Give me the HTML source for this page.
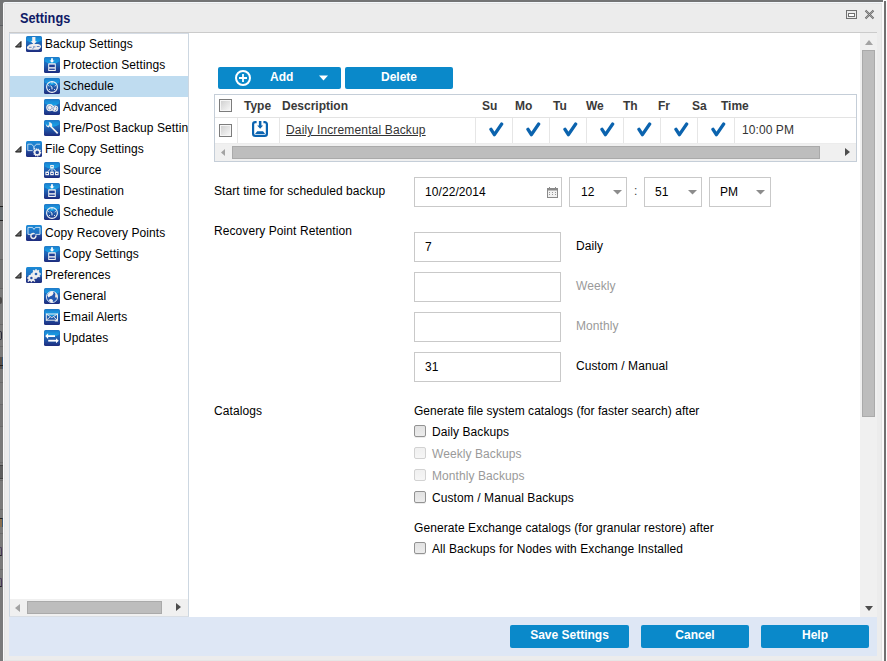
<!DOCTYPE html>
<html><head><meta charset="utf-8">
<style>
*{box-sizing:border-box;margin:0;padding:0}
html,body{width:887px;height:661px;overflow:hidden;background:#7a7a7a;font-family:"Liberation Sans",sans-serif;font-size:12px;color:#000}
.a{position:absolute}
.t{position:absolute;white-space:nowrap;line-height:14px;font-size:12px;letter-spacing:0.08px}
.b{letter-spacing:0}
.b{font-weight:bold}
#dlg{position:absolute;left:3px;top:2px;width:881px;height:670px;background:#ececec;border-left:1px solid #fafafa;border-top:1px solid #f3f7fb;border-radius:2px 2px 0 0;box-shadow:inset 1px 1px 0 #e4e4e4}
.btn{position:absolute;background:#0a89ca;border-radius:2px;color:#fff;font-weight:bold;font-size:12px;line-height:22px;text-align:center}
.fld{position:absolute;background:#fff;border:1px solid #c9c9c9}
.cb{position:absolute;width:12px;height:12px;border:1px solid #939393;border-radius:2px;background:linear-gradient(#e2e2e2,#ececec);box-shadow:0 1px 0 rgba(0,0,0,0.08)}
.cbd{border-color:#d2d2d2;background:linear-gradient(#f0f0f0,#f6f6f6);box-shadow:none}
.gcb{position:absolute;width:13px;height:13px;border:1px solid #7c7c7c;box-shadow:inset 0 0 0 1px #f6f6f6;background:linear-gradient(135deg,#cdcdcd,#fafafa)}
.chk{position:absolute;width:14px;height:14px}
.sep{position:absolute;width:1px;background:#e6e6e6}
.ico{position:absolute;width:16px;height:16px}
.gray{color:#9a9a9a}
</style></head><body>
<svg width="0" height="0" style="position:absolute">
<defs>
<linearGradient id="ig" x1="0" y1="0" x2="0" y2="1">
<stop offset="0" stop-color="#1f7ecb"/><stop offset="0.45" stop-color="#1f66b8"/><stop offset="1" stop-color="#1e2c7e"/>
</linearGradient>
<linearGradient id="fg" x1="0" y1="0" x2="0" y2="1">
<stop offset="0" stop-color="#1c86d3"/><stop offset="1" stop-color="#17a6ea"/>
</linearGradient>
<linearGradient id="ig2" x1="0" y1="0" x2="0" y2="1">
<stop offset="0" stop-color="#1b8ad6"/><stop offset="0.55" stop-color="#1f6ec0"/><stop offset="0.62" stop-color="#22499c"/><stop offset="1" stop-color="#1e2c7e"/>
</linearGradient>
</defs>
</svg>

<!-- background strip details -->
<div class="a" style="left:0;top:0;width:887px;height:25px;background:#737475"></div>
<div class="a" style="left:0;top:25px;width:3px;height:1px;background:#5c5f63"></div>
<div class="a" style="left:0;top:206px;width:3px;height:15px;background:#6b7073;border-top:1px solid #222;border-bottom:1px solid #222"></div>
<div class="a" style="left:0;top:259px;width:3px;height:30px;background:#747474;border-top:1px solid #666;border-bottom:1px solid #666"></div>
<div class="a" style="left:0;top:297px;width:2px;height:7px;background:#4c4a48;border-radius:0 3px 3px 0"></div>
<div class="a" style="left:0;top:324px;width:3px;height:1px;background:#6a6a6a"></div>
<div class="a" style="left:0;top:331px;width:2px;height:9px;border:1px solid #2a2a3a;border-left:0;border-radius:0 2px 2px 0"></div>
<div class="a" style="left:0;top:346px;width:3px;height:1px;background:#6a6a6a"></div>
<div class="a" style="left:0;top:357px;width:3px;height:12px;background:#5a5048;border-right:1px solid #3a5a7a"></div>
<div class="a" style="left:0;top:365px;width:3px;height:1px;background:#222"></div>
<div class="a" style="left:0;top:382px;width:3px;height:1px;background:#6a6a6a"></div>
<div class="a" style="left:0;top:404px;width:3px;height:23px;background:#757575;border-top:1px solid #6a6a6a;border-bottom:1px solid #6a6a6a"></div>
<div class="a" style="left:0;top:462px;width:3px;height:1px;background:#6c6c6c"></div>
<div class="a" style="left:0;top:465px;width:3px;height:14px;background:#5e5e5e;border-top:1px solid #444;border-bottom:1px solid #444"></div>
<div class="a" style="left:0;top:480px;width:3px;height:1px;background:#6a6a6a"></div>
<div class="a" style="left:0;top:509px;width:3px;height:1px;background:#6a6a6a"></div>
<div class="a" style="left:0;top:518px;width:3px;height:9px;background:#8a7050;border-right:1px solid #3a5a7a;border-top:1px solid #222"></div>
<div class="a" style="left:0;top:533px;width:3px;height:1px;background:#6a6a6a"></div>
<div class="a" style="left:0;top:547px;width:2px;height:9px;border:1px solid #4a3a5a;border-left:0;border-radius:0 3px 0 0;border-bottom:1px solid #222"></div>
<div class="a" style="left:0;top:569px;width:3px;height:1px;background:#6a6a6a"></div>
<div class="a" style="left:0;top:578px;width:2px;height:9px;border:1px solid #4a3a5a;border-left:0;border-radius:0 3px 0 0;border-bottom:1px solid #222"></div>
<div class="a" style="left:883px;top:1px;width:3px;height:660px;background:#707070;border-left:1px solid #fafafa"></div>
<div class="a" style="left:886px;top:0;width:1px;height:661px;background:#fcfcfc"></div><div class="a" style="left:883px;top:0;width:4px;height:1px;background:#fcfcfc"></div>

<div id="dlg"></div>
<div class="a" style="left:881px;top:3px;width:1px;height:658px;background:#e2e2e2"></div>
<div class="a" style="left:5px;top:660px;width:876px;height:1px;background:#e6e6e6"></div>
<div class="a" style="left:882px;top:2px;width:2px;height:659px;background:#fafafa"></div>

<!-- title -->
<div class="t b" style="left:20px;top:10px;font-size:13px;line-height:16px;color:#0f1a66;transform:scale(0.98,1.1);transform-origin:0 3px">Settings</div>
<!-- restore icon -->
<div class="a" style="left:846px;top:10px;width:11px;height:9px;border:1px solid #707070"></div>
<div class="a" style="left:848px;top:13px;width:7px;height:4px;border:1px solid #707070;background:#fff"></div>
<svg class="a" style="left:864px;top:9px" width="11" height="11" viewBox="0 0 11 11"><path d="M1.5 1.5L9.5 9.5M9.5 1.5L1.5 9.5" stroke="#6a6a6a" stroke-width="1.9" fill="none"/><path d="M1.5 1.5L9.5 9.5M9.5 1.5L1.5 9.5" stroke="#d0d0d0" stroke-width="0.5" fill="none"/></svg>

<!-- top border of panels -->
<div class="a" style="left:9px;top:32px;width:868px;height:1px;background:#cbcbcb"></div>

<!-- tree panel -->
<div class="a" style="left:9px;top:33px;width:180px;height:584px;background:#fff;border-left:1px solid #cdd7e1;border-right:1px solid #cdd7e1;border-bottom:1px solid #d9dee4"></div>
<div class="a" style="left:10px;top:33px;width:178px;height:1px;background:#d5dce5"></div>
<div class="a" style="left:10px;top:76px;width:178px;height:21px;background:#bfdcf0"></div>

<!-- tree scrollbar -->
<div class="a" style="left:10px;top:599px;width:178px;height:17px;background:#f0f0f0"></div>
<div class="a" style="left:27px;top:601px;width:135px;height:13px;background:#bdbdbd;border:1px solid #aaaaaa"></div>
<svg class="a" style="left:15px;top:604px" width="6" height="8"><path d="M5 0L0 4L5 8Z" fill="#a3a3a3"/></svg>
<svg class="a" style="left:176px;top:603px" width="6" height="8"><path d="M0 0L5 4L0 8Z" fill="#4d4d4d"/></svg>

<div class="a" style="left:10px;top:33px;width:178px;height:566px;overflow:hidden">
<svg class="a" style="left:5px;top:7px" width="7" height="8" viewBox="0 0 7 8"><path d="M6 1.5V7H0.5Z" fill="#6a6a6a" stroke="#151515" stroke-width="1" stroke-linejoin="round"/></svg>
<svg class="ico" style="left:16px;top:3px" width="16" height="16" viewBox="0 0 16 16"><rect x="0" y="0" width="16" height="16" rx="1.5" fill="url(#ig)"/><path d="M0.6 1.2H15.4V4.2Q8 10 0.6 4.2Z" fill="url(#fg)"/><path d="M6.2 1H9.4V5.2H10.9L7.8 8.6 4.7 5.2H6.2Z" fill="#f4f2f2"/><path d="M2.4 9.4Q3 8.2 6 8.1H12Q14.6 8.3 15.1 10.2Q15.1 12.6 12.4 13.7H4.2Q1 13.9 0.8 11.9Q0.8 10.3 2.4 9.4Z" fill="#ededed"/><path d="M3 11.3h2.6M7 10.9h2.4M10.8 10.5h2.8M6.4 12.9l1.4-1.2" stroke="#3f68b2" stroke-width="0.8" fill="none"/></svg>
<div class="t" style="left:35px;top:4px;color:#000">Backup Settings</div>
<svg class="ico" style="left:34px;top:24px" width="16" height="16" viewBox="0 0 16 16"><rect x="0" y="0" width="16" height="16" rx="1.5" fill="url(#ig)"/><path d="M0.6 1.2H15.4V4.2Q8 10 0.6 4.2Z" fill="url(#fg)"/><path d="M7.1 1.2h1.8v2.4h1.6L8 5.8 5.5 3.6h1.6z" fill="#fff"/><rect x="4.2" y="6.3" width="7.6" height="7.8" rx="0.6" fill="#f3f3f3"/><rect x="5.2" y="7.6" width="5.6" height="2.6" fill="#1f3f96"/><rect x="5.2" y="11.6" width="5.6" height="1.3" fill="#1f3f96"/></svg>
<div class="t" style="left:53px;top:25px;color:#000">Protection Settings</div>
<svg class="ico" style="left:34px;top:45px" width="16" height="16" viewBox="0 0 16 16"><rect x="0" y="0" width="16" height="16" rx="1.5" fill="url(#ig)"/><path d="M0.6 1.2H15.4V4.2Q8 10 0.6 4.2Z" fill="url(#fg)"/><circle cx="8" cy="9" r="5.4" fill="none" stroke="#f4f4f4" stroke-width="1.1"/><path d="M8 4.3v1.2M4.3 7.5l1 .6M11.7 7.5l-1 .6M5 12l.9-.8M11 12l-.9-.8M8 9.2l-1.6-1.4M8 9.2v2.2" stroke="#f4f4f4" stroke-width="1"/></svg>
<div class="t" style="left:53px;top:46px;color:#000">Schedule</div>
<svg class="ico" style="left:34px;top:66px" width="16" height="16" viewBox="0 0 16 16"><rect x="0" y="0" width="16" height="16" rx="1.5" fill="url(#ig)"/><path d="M0.6 1.2H15.4V4.2Q8 10 0.6 4.2Z" fill="url(#fg)"/><circle cx="5.8" cy="8.6" r="3.6" fill="#eee"/><circle cx="11" cy="9.6" r="3.2" fill="#eee"/><circle cx="5.8" cy="8.6" r="2.2" fill="none" stroke="#2350a8" stroke-width="0.9" stroke-dasharray="0.9 0.9"/><circle cx="11" cy="9.6" r="1.9" fill="none" stroke="#2350a8" stroke-width="0.9" stroke-dasharray="0.9 0.9"/></svg>
<div class="t" style="left:53px;top:67px;color:#000">Advanced</div>
<svg class="ico" style="left:34px;top:87px" width="16" height="16" viewBox="0 0 16 16"><rect x="0" y="0" width="16" height="16" rx="1.5" fill="url(#ig)"/><path d="M0.6 1.2H15.4V4.2Q8 10 0.6 4.2Z" fill="url(#fg)"/><path d="M5.2 3.2a3 3 0 0 0 1.6 4.3l6.3 6.4 1.2-1.2-6.3-6.3A3 3 0 0 0 4.6 2.3l.9 1.8-.8 1.5-1.6.1-1 -1.6a3 3 0 0 0 2.9 3.3" fill="#f2f2f2"/></svg>
<div class="t" style="left:53px;top:88px;color:#000">Pre/Post Backup Settings</div>
<svg class="a" style="left:5px;top:112px" width="7" height="8" viewBox="0 0 7 8"><path d="M6 1.5V7H0.5Z" fill="#6a6a6a" stroke="#151515" stroke-width="1" stroke-linejoin="round"/></svg>
<svg class="ico" style="left:16px;top:108px" width="16" height="16" viewBox="0 0 16 16"><rect x="0" y="0" width="16" height="16" rx="1.5" fill="url(#ig2)"/><path d="M1.8 3.2h3.8l2.4 2.6 2.4-2.6h3.8" fill="none" stroke="#cfe3f3" stroke-width="0.9"/><path d="M1.8 3.2v6.4h4.8" fill="none" stroke="#cfe3f3" stroke-width="0.9"/><path d="M7.5 5.5l1.6 1.8-1.6 1.6z" fill="#fff"/><circle cx="11.2" cy="11.4" r="3.2" fill="none" stroke="#f2f2f2" stroke-width="1.7" stroke-dasharray="1.15 0.75"/><circle cx="11.2" cy="11.4" r="2.5" fill="none" stroke="#f2f2f2" stroke-width="1.4"/></svg>
<div class="t" style="left:35px;top:109px;color:#000">File Copy Settings</div>
<svg class="ico" style="left:34px;top:129px" width="16" height="16" viewBox="0 0 16 16"><rect x="0" y="0" width="16" height="16" rx="1.5" fill="url(#ig)"/><path d="M0.6 1.2H15.4V4.2Q8 10 0.6 4.2Z" fill="url(#fg)"/><rect x="6.2" y="3" width="3.6" height="3.2" fill="#f2f2f2"/><rect x="7.2" y="4" width="1.6" height="0.8" fill="#1d8fd8"/><path d="M7 6.4L3.8 9.6M9 6.4l3.2 3.2M8 6.2v3.4" stroke="#f2f2f2" stroke-width="0.9"/><rect x="1.4" y="9.6" width="3.6" height="3.6" fill="#f2f2f2"/><rect x="6.2" y="9.6" width="3.6" height="3.6" fill="#f2f2f2"/><rect x="11" y="9.6" width="3.6" height="3.6" fill="#f2f2f2"/><rect x="2.4" y="11" width="1.6" height="1" fill="#1f3f96"/><rect x="7.2" y="11" width="1.6" height="1" fill="#1f3f96"/><rect x="12" y="11" width="1.6" height="1" fill="#1f3f96"/></svg>
<div class="t" style="left:53px;top:130px;color:#000">Source</div>
<svg class="ico" style="left:34px;top:150px" width="16" height="16" viewBox="0 0 16 16"><rect x="0" y="0" width="16" height="16" rx="1.5" fill="url(#ig)"/><path d="M0.6 1.2H15.4V4.2Q8 10 0.6 4.2Z" fill="url(#fg)"/><path d="M7.1 1.2h1.8v2.4h1.6L8 5.8 5.5 3.6h1.6z" fill="#fff"/><rect x="4.2" y="6.3" width="7.6" height="7.8" rx="0.6" fill="#f3f3f3"/><rect x="5.2" y="7.6" width="5.6" height="2.6" fill="#1f3f96"/><rect x="5.2" y="11.6" width="5.6" height="1.3" fill="#1f3f96"/></svg>
<div class="t" style="left:53px;top:151px;color:#000">Destination</div>
<svg class="ico" style="left:34px;top:171px" width="16" height="16" viewBox="0 0 16 16"><rect x="0" y="0" width="16" height="16" rx="1.5" fill="url(#ig)"/><path d="M0.6 1.2H15.4V4.2Q8 10 0.6 4.2Z" fill="url(#fg)"/><circle cx="8" cy="9" r="5.4" fill="none" stroke="#f4f4f4" stroke-width="1.1"/><path d="M8 4.3v1.2M4.3 7.5l1 .6M11.7 7.5l-1 .6M5 12l.9-.8M11 12l-.9-.8M8 9.2l-1.6-1.4M8 9.2v2.2" stroke="#f4f4f4" stroke-width="1"/></svg>
<div class="t" style="left:53px;top:172px;color:#000">Schedule</div>
<svg class="a" style="left:5px;top:196px" width="7" height="8" viewBox="0 0 7 8"><path d="M6 1.5V7H0.5Z" fill="#6a6a6a" stroke="#151515" stroke-width="1" stroke-linejoin="round"/></svg>
<svg class="ico" style="left:16px;top:192px" width="16" height="16" viewBox="0 0 16 16"><rect x="0" y="0" width="16" height="16" rx="1.5" fill="url(#ig2)"/><path d="M6.6 9.4H2V2.4h4.4l1.6 2 1.6-2H14v7h-4.6" fill="none" stroke="#d8e8f5" stroke-width="0.9"/><path d="M9.8 10.4a2.5 2.5 0 1 1-1.2-1.6" fill="none" stroke="#ececec" stroke-width="1.5"/></svg>
<div class="t" style="left:35px;top:193px;color:#000">Copy Recovery Points</div>
<svg class="ico" style="left:34px;top:213px" width="16" height="16" viewBox="0 0 16 16"><rect x="0" y="0" width="16" height="16" rx="1.5" fill="url(#ig)"/><path d="M0.6 1.2H15.4V4.2Q8 10 0.6 4.2Z" fill="url(#fg)"/><path d="M7.1 1.2h1.8v2.4h1.6L8 5.8 5.5 3.6h1.6z" fill="#fff"/><rect x="4.2" y="6.3" width="7.6" height="7.8" rx="0.6" fill="#f3f3f3"/><rect x="5.2" y="7.6" width="5.6" height="2.6" fill="#1f3f96"/><rect x="5.2" y="11.6" width="5.6" height="1.3" fill="#1f3f96"/></svg>
<div class="t" style="left:53px;top:214px;color:#000">Copy Settings</div>
<svg class="a" style="left:5px;top:238px" width="7" height="8" viewBox="0 0 7 8"><path d="M6 1.5V7H0.5Z" fill="#6a6a6a" stroke="#151515" stroke-width="1" stroke-linejoin="round"/></svg>
<svg class="ico" style="left:16px;top:234px" width="16" height="16" viewBox="0 0 16 16"><rect x="0" y="0" width="16" height="16" rx="1.5" fill="url(#ig2)"/><g fill="#eee"><circle cx="10" cy="7" r="3.7"/><path d="M9.2 2.2h1.6v9.6H9.2zM5.2 6.2h9.6v1.6H5.2zM6.6 3.8l1.1-1.1 6.6 6.6-1.1 1.1zM13.4 3.8l-1.1-1.1-6.6 6.6 1.1 1.1z"/><circle cx="5.4" cy="11" r="3.2"/><path d="M4.7 6.8h1.4v8.4H4.7zM1.2 10.3h8.4v1.4H1.2zM2.4 8.9l1-1 6 6-1 1zM8.4 8.9l-1-1-6 6 1 1z"/></g><circle cx="10" cy="7" r="1.3" fill="#2a66b8"/><circle cx="5.4" cy="11" r="1.2" fill="#2350a8"/></svg>
<div class="t" style="left:35px;top:235px;color:#000">Preferences</div>
<svg class="ico" style="left:34px;top:255px" width="16" height="16" viewBox="0 0 16 16"><rect x="0" y="0" width="16" height="16" rx="1.5" fill="url(#ig)"/><path d="M0.6 1.2H15.4V4.2Q8 10 0.6 4.2Z" fill="url(#fg)"/><circle cx="8" cy="9" r="5.6" fill="#2458b0" stroke="#e8eef8" stroke-width="0.9"/><path d="M3.3 7.5Q4.8 3.8 8.6 3.6L9.6 5.2 8.2 7.4Q6 7.6 4.6 9.6Z" fill="#f4f4f4"/><path d="M5.2 11.4Q7.6 10.4 9 12.4L8.6 14.4Q6.2 14.4 5 12.8Z" fill="#f4f4f4"/><path d="M10.8 4.2Q13.6 5.6 13.8 9.2L11.6 9.8Q10.6 8 11.4 6.4Z" fill="#f0e6dc"/></svg>
<div class="t" style="left:53px;top:256px;color:#000">General</div>
<svg class="ico" style="left:34px;top:276px" width="16" height="16" viewBox="0 0 16 16"><rect x="0" y="0" width="16" height="16" rx="1.5" fill="url(#ig)"/><path d="M0.6 1.2H15.4V4.2Q8 10 0.6 4.2Z" fill="url(#fg)"/><rect x="2.3" y="5" width="11.2" height="6.2" fill="none" stroke="#eee" stroke-width="1"/><path d="M2.3 5l5.6 3.6L13.5 5M2.3 11.2l3.6-3M13.5 11.2l-3.6-3" fill="none" stroke="#eee" stroke-width="0.9"/><path d="M10.6 12.4l1.8-2.2 1.8 2.2z" fill="#eee"/></svg>
<div class="t" style="left:53px;top:277px;color:#000">Email Alerts</div>
<svg class="ico" style="left:34px;top:297px" width="16" height="16" viewBox="0 0 16 16"><rect x="0" y="0" width="16" height="16" rx="1.5" fill="url(#ig)"/><path d="M0.6 1.2H15.4V4.2Q8 10 0.6 4.2Z" fill="url(#fg)"/><path d="M11 5.2H4v1.8h7z" fill="#fff"/><path d="M1.2 6.1L4.1 3.3v5.6z" fill="#fff"/><path d="M4.2 9.8h8v1.8h-8z" fill="#fff"/><path d="M14.8 10.7l-2.8-2.4v5z" fill="#fff"/></svg>
<div class="t" style="left:53px;top:298px;color:#000">Updates</div>
</div>

<!-- content panel -->
<div class="a" style="left:189px;top:33px;width:671px;height:584px;background:#fff"></div>
<!-- vertical scrollbar -->
<div class="a" style="left:860px;top:33px;width:17px;height:584px;background:#f0f0f0"></div>
<svg class="a" style="left:865px;top:40px" width="8" height="5"><path d="M0 5L4 0L8 5Z" fill="#a3a3a3"/></svg>
<div class="a" style="left:862px;top:50px;width:13px;height:367px;background:#bdbdbd;border:1px solid #aaaaaa"></div>
<svg class="a" style="left:865px;top:606px" width="8" height="5"><path d="M0 0L4 5L8 0Z" fill="#4d4d4d"/></svg>

<div class="btn" style="left:218px;top:67px;width:123px;height:22px"></div>
<svg class="a" style="left:234px;top:69px" width="18" height="18" viewBox="0 0 18 18"><circle cx="9" cy="9" r="7" fill="none" stroke="#fff" stroke-width="2"/><path d="M9 5v8M5 9h8" stroke="#fff" stroke-width="1.8"/></svg>
<div class="t b" style="left:270px;top:70px;color:#fff">Add</div>
<svg class="a" style="left:319px;top:75px" width="10" height="6"><path d="M0 0.5h9L4.5 5.5z" fill="#fff"/></svg>
<div class="btn" style="left:345px;top:67px;width:108px;height:22px;line-height:20px">Delete</div>
<div class="a" style="left:214px;top:94px;width:643px;height:68px;border:1px solid #c5ced8;background:#fff"></div>
<div class="a" style="left:215px;top:117px;width:641px;height:1px;background:#e3e3e3"></div>
<div class="a" style="left:215px;top:143px;width:641px;height:1px;background:#ececec"></div>
<div class="sep" style="left:237px;top:118px;height:25px"></div>
<div class="sep" style="left:279px;top:118px;height:25px"></div>
<div class="sep" style="left:475px;top:118px;height:25px"></div>
<div class="sep" style="left:512px;top:118px;height:25px"></div>
<div class="sep" style="left:549px;top:118px;height:25px"></div>
<div class="sep" style="left:586px;top:118px;height:25px"></div>
<div class="sep" style="left:623px;top:118px;height:25px"></div>
<div class="sep" style="left:660px;top:118px;height:25px"></div>
<div class="sep" style="left:697px;top:118px;height:25px"></div>
<div class="sep" style="left:734px;top:118px;height:25px"></div>
<div class="gcb" style="left:219px;top:99px"></div>
<div class="gcb" style="left:219px;top:124px"></div>
<div class="t b" style="left:244px;top:99px;color:#3a3a3a">Type</div>
<div class="t b" style="left:282px;top:99px;color:#3a3a3a">Description</div>
<div class="t b" style="left:482px;top:99px;color:#3a3a3a">Su</div>
<div class="t b" style="left:515px;top:99px;color:#3a3a3a">Mo</div>
<div class="t b" style="left:553px;top:99px;color:#3a3a3a">Tu</div>
<div class="t b" style="left:586px;top:99px;color:#3a3a3a">We</div>
<div class="t b" style="left:623px;top:99px;color:#3a3a3a">Th</div>
<div class="t b" style="left:658px;top:99px;color:#3a3a3a">Fr</div>
<div class="t b" style="left:692px;top:99px;color:#3a3a3a">Sa</div>
<div class="t b" style="left:721px;top:99px;color:#3a3a3a">Time</div>
<svg class="a" style="left:252px;top:121px" width="16" height="16" viewBox="0 0 16 16"><path d="M4.6 1.1H3.3A2.2 2.2 0 0 0 1.1 3.3V12.7A2.2 2.2 0 0 0 3.3 14.9H12.7A2.2 2.2 0 0 0 14.9 12.7V3.3A2.2 2.2 0 0 0 12.7 1.1H11.4" fill="none" stroke="#0a63b0" stroke-width="2.2"/><path d="M6.9 0H9.4V4.4H11.1L8.15 7.8 5.2 4.4H6.9Z" fill="#0a63b0"/><path d="M3 12.9H13.2L11 10.2H5.2Z" fill="#0a63b0"/></svg>
<div class="t" style="left:286px;top:123px;color:#333;text-decoration:underline;letter-spacing:0.15px">Daily Incremental Backup</div>
<svg class="a" style="left:489px;top:122px" width="15" height="15" viewBox="0 0 15 15"><path d="M2 7.4L5.4 12.6 12.6 2.1" fill="none" stroke="#0b63ae" stroke-width="3.4" stroke-linecap="round" stroke-linejoin="round"/></svg>
<svg class="a" style="left:526px;top:122px" width="15" height="15" viewBox="0 0 15 15"><path d="M2 7.4L5.4 12.6 12.6 2.1" fill="none" stroke="#0b63ae" stroke-width="3.4" stroke-linecap="round" stroke-linejoin="round"/></svg>
<svg class="a" style="left:563px;top:122px" width="15" height="15" viewBox="0 0 15 15"><path d="M2 7.4L5.4 12.6 12.6 2.1" fill="none" stroke="#0b63ae" stroke-width="3.4" stroke-linecap="round" stroke-linejoin="round"/></svg>
<svg class="a" style="left:600px;top:122px" width="15" height="15" viewBox="0 0 15 15"><path d="M2 7.4L5.4 12.6 12.6 2.1" fill="none" stroke="#0b63ae" stroke-width="3.4" stroke-linecap="round" stroke-linejoin="round"/></svg>
<svg class="a" style="left:637px;top:122px" width="15" height="15" viewBox="0 0 15 15"><path d="M2 7.4L5.4 12.6 12.6 2.1" fill="none" stroke="#0b63ae" stroke-width="3.4" stroke-linecap="round" stroke-linejoin="round"/></svg>
<svg class="a" style="left:674px;top:122px" width="15" height="15" viewBox="0 0 15 15"><path d="M2 7.4L5.4 12.6 12.6 2.1" fill="none" stroke="#0b63ae" stroke-width="3.4" stroke-linecap="round" stroke-linejoin="round"/></svg>
<svg class="a" style="left:711px;top:122px" width="15" height="15" viewBox="0 0 15 15"><path d="M2 7.4L5.4 12.6 12.6 2.1" fill="none" stroke="#0b63ae" stroke-width="3.4" stroke-linecap="round" stroke-linejoin="round"/></svg>
<div class="t" style="left:742px;top:123px;color:#333">10:00 PM</div>
<div class="a" style="left:215px;top:144px;width:641px;height:17px;background:#f0f0f0"></div>
<div class="a" style="left:232px;top:146px;width:588px;height:13px;background:#bdbdbd;border:1px solid #aaaaaa"></div>
<svg class="a" style="left:221px;top:149px" width="4" height="7"><path d="M4 0L0 3.5L4 7Z" fill="#a3a3a3"/></svg>
<svg class="a" style="left:845px;top:148px" width="5" height="8"><path d="M0 0L5 4L0 8Z" fill="#4d4d4d"/></svg>
<div class="t " style="left:214px;top:184px;">Start time for scheduled backup</div>
<div class="fld" style="left:414px;top:177px;width:148px;height:30px"></div>
<div class="t " style="left:425px;top:185px;">10/22/2014</div>
<svg class="a" style="left:547px;top:187px" width="11" height="11" viewBox="0 0 11 11"><rect x="0.5" y="1.5" width="10" height="9" fill="#f2f2f2" stroke="#8a8a8a"/><rect x="0.5" y="1.5" width="10" height="2" fill="#8a8a8a"/><path d="M2.5 0v2M8.5 0v2" stroke="#8a8a8a"/><path d="M2 5.5h1M5 5.5h1M8 5.5h1M2 7.5h1M5 7.5h1M8 7.5h1" stroke="#9a9a9a"/></svg>
<div class="fld" style="left:569px;top:177px;width:58px;height:30px"></div>
<div class="t " style="left:581px;top:185px;">12</div>
<svg class="a" style="left:613px;top:190px" width="9" height="5"><path d="M0 0h9L4.5 4.5z" fill="#8c8c8c"/></svg>
<div class="fld" style="left:644px;top:177px;width:58px;height:30px"></div>
<div class="t " style="left:655px;top:185px;">51</div>
<svg class="a" style="left:688px;top:190px" width="9" height="5"><path d="M0 0h9L4.5 4.5z" fill="#8c8c8c"/></svg>
<div class="fld" style="left:709px;top:177px;width:62px;height:30px"></div>
<div class="t " style="left:720px;top:185px;">PM</div>
<svg class="a" style="left:756px;top:190px" width="9" height="5"><path d="M0 0h9L4.5 4.5z" fill="#8c8c8c"/></svg>
<div class="t " style="left:634px;top:184px;color:#444">:</div>
<div class="t " style="left:214px;top:224px;">Recovery Point Retention</div>
<div class="fld" style="left:414px;top:232px;width:147px;height:30px"></div>
<div class="t " style="left:425px;top:240px;">7</div>
<div class="t " style="left:576px;top:239px;">Daily</div>
<div class="fld" style="left:414px;top:272px;width:147px;height:30px"></div>
<div class="t gray" style="left:576px;top:279px;">Weekly</div>
<div class="fld" style="left:414px;top:312px;width:147px;height:30px"></div>
<div class="t gray" style="left:576px;top:319px;">Monthly</div>
<div class="fld" style="left:414px;top:352px;width:147px;height:30px"></div>
<div class="t " style="left:425px;top:360px;">31</div>
<div class="t " style="left:576px;top:359px;">Custom / Manual</div>
<div class="t " style="left:214px;top:404px;">Catalogs</div>
<div class="t " style="left:414px;top:404px;letter-spacing:0.035px">Generate file system catalogs (for faster search) after</div>
<div class="cb " style="left:414px;top:425px"></div>
<div class="t " style="left:432px;top:425px;">Daily Backups</div>
<div class="cb cbd" style="left:414px;top:447px"></div>
<div class="t gray" style="left:432px;top:447px;">Weekly Backups</div>
<div class="cb cbd" style="left:414px;top:469px"></div>
<div class="t gray" style="left:432px;top:469px;">Monthly Backups</div>
<div class="cb " style="left:414px;top:491px"></div>
<div class="t " style="left:432px;top:491px;">Custom / Manual Backups</div>
<div class="t " style="left:414px;top:521px;">Generate Exchange catalogs (for granular restore) after</div>
<div class="cb" style="left:414px;top:542px"></div>
<div class="t " style="left:432px;top:542px;">All Backups for Nodes with Exchange Installed</div>

<!-- footer -->
<div class="a" style="left:9px;top:617px;width:868px;height:39px;background:#dee7f5"></div>
<div class="btn" style="left:510px;top:625px;width:119px;height:23px;line-height:21px">Save Settings</div>
<div class="btn" style="left:641px;top:625px;width:108px;height:23px;line-height:21px">Cancel</div>
<div class="btn" style="left:761px;top:625px;width:108px;height:23px;line-height:21px">Help</div>

</body></html>
